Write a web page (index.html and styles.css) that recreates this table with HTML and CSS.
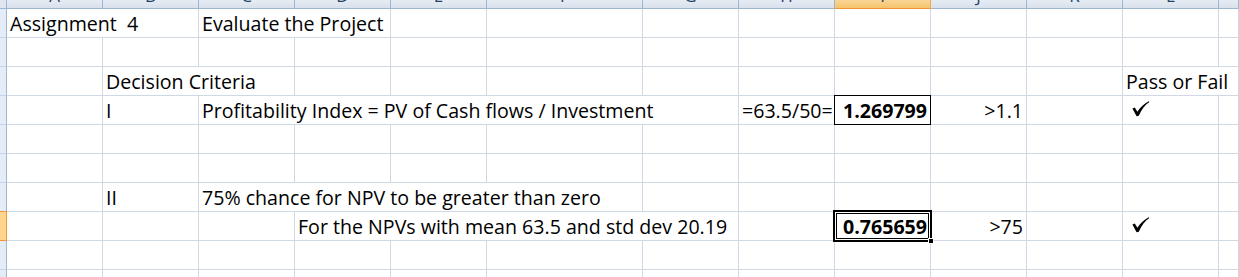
FILE: index.html
```html
<!DOCTYPE html>
<html lang="en">
<head>
<meta charset="utf-8">
<title>Assignment 4 – Evaluate the Project</title>
<link rel="stylesheet" href="styles.css">
</head>
<body>
<div class="sheet">
  <!-- column headers -->
  <div class="corner"></div>
  <div class="ch"><span>A</span></div>
  <div class="ch"><span>B</span></div>
  <div class="ch"><span>C</span></div>
  <div class="ch"><span>D</span></div>
  <div class="ch"><span>E</span></div>
  <div class="ch"><span>F</span></div>
  <div class="ch"><span>G</span></div>
  <div class="ch"><span>H</span></div>
  <div class="ch ch-sel"><span>I</span></div>
  <div class="ch"><span>J</span></div>
  <div class="ch"><span>K</span></div>
  <div class="ch"><span>L</span></div>
  <div class="ch"></div>

  <!-- row 1 -->
  <div class="rh"></div>
  <div class="c span2 keep">Assignment  4</div>
  <div class="c span2">Evaluate the Project</div>
  <div class="c"></div><div class="c"></div><div class="c"></div><div class="c"></div>
  <div class="c"></div><div class="c"></div><div class="c"></div><div class="c"></div><div class="c"></div>

  <!-- row 2 -->
  <div class="rh"></div>
  <div class="c"></div><div class="c"></div><div class="c"></div><div class="c"></div><div class="c"></div>
  <div class="c"></div><div class="c"></div><div class="c"></div><div class="c"></div><div class="c"></div>
  <div class="c"></div><div class="c"></div><div class="c"></div>

  <!-- row 3 -->
  <div class="rh"></div>
  <div class="c"></div>
  <div class="c span2">Decision Criteria</div>
  <div class="c"></div><div class="c"></div><div class="c"></div><div class="c"></div><div class="c"></div>
  <div class="c"></div><div class="c"></div><div class="c"></div>
  <div class="c span2">Pass or Fail</div>

  <!-- row 4 -->
  <div class="rh"></div>
  <div class="c"></div>
  <div class="c">I</div>
  <div class="c span5">Profitability Index = PV of Cash flows / Investment</div>
  <div class="c formula">=63.5/50=</div>
  <div class="c num bold boxed">1.269799</div>
  <div class="c num">&gt;1.1</div>
  <div class="c"></div>
  <div class="c mark"><svg class="tick" viewBox="0 0 18 16" width="18" height="16" aria-hidden="true"><path d="M0.4 7.6 L2.8 6.4 L5.4 10.8 C8 6.6 11.6 2.8 16.8 0.2 L17.4 1 C12.8 4 9.4 8.6 6.8 14.8 L4.6 15.2 Z"/></svg></div>
  <div class="c"></div>

  <!-- row 5 -->
  <div class="rh"></div>
  <div class="c"></div><div class="c"></div><div class="c"></div><div class="c"></div><div class="c"></div>
  <div class="c"></div><div class="c"></div><div class="c"></div><div class="c"></div><div class="c"></div>
  <div class="c"></div><div class="c"></div><div class="c"></div>

  <!-- row 6 -->
  <div class="rh"></div>
  <div class="c"></div><div class="c"></div><div class="c"></div><div class="c"></div><div class="c"></div>
  <div class="c"></div><div class="c"></div><div class="c"></div><div class="c"></div><div class="c"></div>
  <div class="c"></div><div class="c"></div><div class="c"></div>

  <!-- row 7 -->
  <div class="rh"></div>
  <div class="c"></div>
  <div class="c">II</div>
  <div class="c span4">75% chance for NPV to be greater than zero</div>
  <div class="c"></div><div class="c"></div><div class="c"></div><div class="c"></div>
  <div class="c"></div><div class="c"></div><div class="c"></div>

  <!-- row 8 -->
  <div class="rh rh-sel"></div>
  <div class="c"></div><div class="c"></div><div class="c"></div>
  <div class="c span4">For the NPVs with mean 63.5 and std dev 20.19</div>
  <div class="c"></div>
  <div class="c num bold boxed active">0.765659<i class="handle"></i></div>
  <div class="c num">&gt;75</div>
  <div class="c"></div>
  <div class="c mark"><svg class="tick" viewBox="0 0 18 16" width="18" height="16" aria-hidden="true"><path d="M0.4 7.6 L2.8 6.4 L5.4 10.8 C8 6.6 11.6 2.8 16.8 0.2 L17.4 1 C12.8 4 9.4 8.6 6.8 14.8 L4.6 15.2 Z"/></svg></div>
  <div class="c"></div>

  <!-- row 9 -->
  <div class="rh"></div>
  <div class="c"></div><div class="c"></div><div class="c"></div><div class="c"></div><div class="c"></div>
  <div class="c"></div><div class="c"></div><div class="c"></div><div class="c"></div><div class="c"></div>
  <div class="c"></div><div class="c"></div><div class="c"></div>

  <!-- row 10 -->
  <div class="rh"></div>
  <div class="c"></div><div class="c"></div><div class="c"></div><div class="c"></div><div class="c"></div>
  <div class="c"></div><div class="c"></div><div class="c"></div><div class="c"></div><div class="c"></div>
  <div class="c"></div><div class="c"></div><div class="c"></div>
</div>
</body>
</html>
```

FILE: styles.css
```css
html, body {
  margin: 0;
  padding: 0;
  background: #fff;
  overflow: hidden;
}

/* worksheet grid: row-header strip, columns A–M, header row + data rows */
.sheet {
  display: grid;
  grid-template-columns: 7px repeat(5, 96px) 156px repeat(6, 96px) 1fr;
  grid-template-rows: 9px repeat(10, 29px);
  width: 1239px;
  height: 277px;
  overflow: hidden;
  font-family: "Open Sans", "Liberation Sans", sans-serif;
  color: #000;
}

/* header band */
.corner {
  background: #dfe6ef;
  border-right: 1px solid #9eb6ce;
  border-bottom: 1px solid #9eb6ce;
}

.ch {
  background: linear-gradient(#e6ecf4, #d8e1ec);
  border-right: 1px solid #9eb6ce;
  border-bottom: 1px solid #9eb6ce;
  overflow: hidden;
  text-align: center;
  color: #27415f;
  font-size: 17px;
}

.ch span {
  display: block;
  line-height: 20px;
  margin-top: -14px;
}

.ch-sel {
  background: linear-gradient(#f9d596, #f5c46c);
  border-bottom-color: #f29536;
  border-right-color: #f0a850;
}

/* row-header strip */
.rh {
  background: #e4ecf7;
  border-right: 1px solid #9eb6ce;
  border-bottom: 1px solid #c5d3e3;
}

.rh-sel {
  background: #ffd58d;
  border-right-color: #f29536;
  border-bottom-color: #f29536;
  box-shadow: 0 -1px 0 #f29536;
}

/* cells */
.c {
  position: relative;
  display: flex;
  align-items: flex-end;
  border-right: 1px solid #d0d7e5;
  border-bottom: 1px solid #d0d7e5;
  padding: 0 3px 2px 3px;
  font-size: 19.6px;
  line-height: 22px;
  white-space: nowrap;
  min-width: 0;
}

.keep { white-space: pre; }

.span2 { grid-column: span 2; }
.span4 { grid-column: span 4; }
.span5 { grid-column: span 5; }

.num { justify-content: flex-end; }
.bold { font-weight: 700; }

.formula {
  overflow: visible;
}

/* cell with an outline border drawn over the gridlines */
.boxed {
  margin: -1px 0 0 -1px;
  border: 1px solid #000;
}

/* active cell: thick outer ring plus the cell's own thin border inside */
.active {
  box-shadow: 0 0 0 1px #000, inset 0 0 0 1px #fff, inset 0 0 0 2px #000;
  z-index: 1;
}

.handle {
  position: absolute;
  right: -4px;
  bottom: -4px;
  width: 4px;
  height: 4px;
  background: #000;
  border: 1px solid #fff;
}

/* Pass mark */
.mark {
  align-items: flex-start;
}

.tick {
  display: block;
  margin: 5px 0 0 6px;
  fill: #000;
}
```
